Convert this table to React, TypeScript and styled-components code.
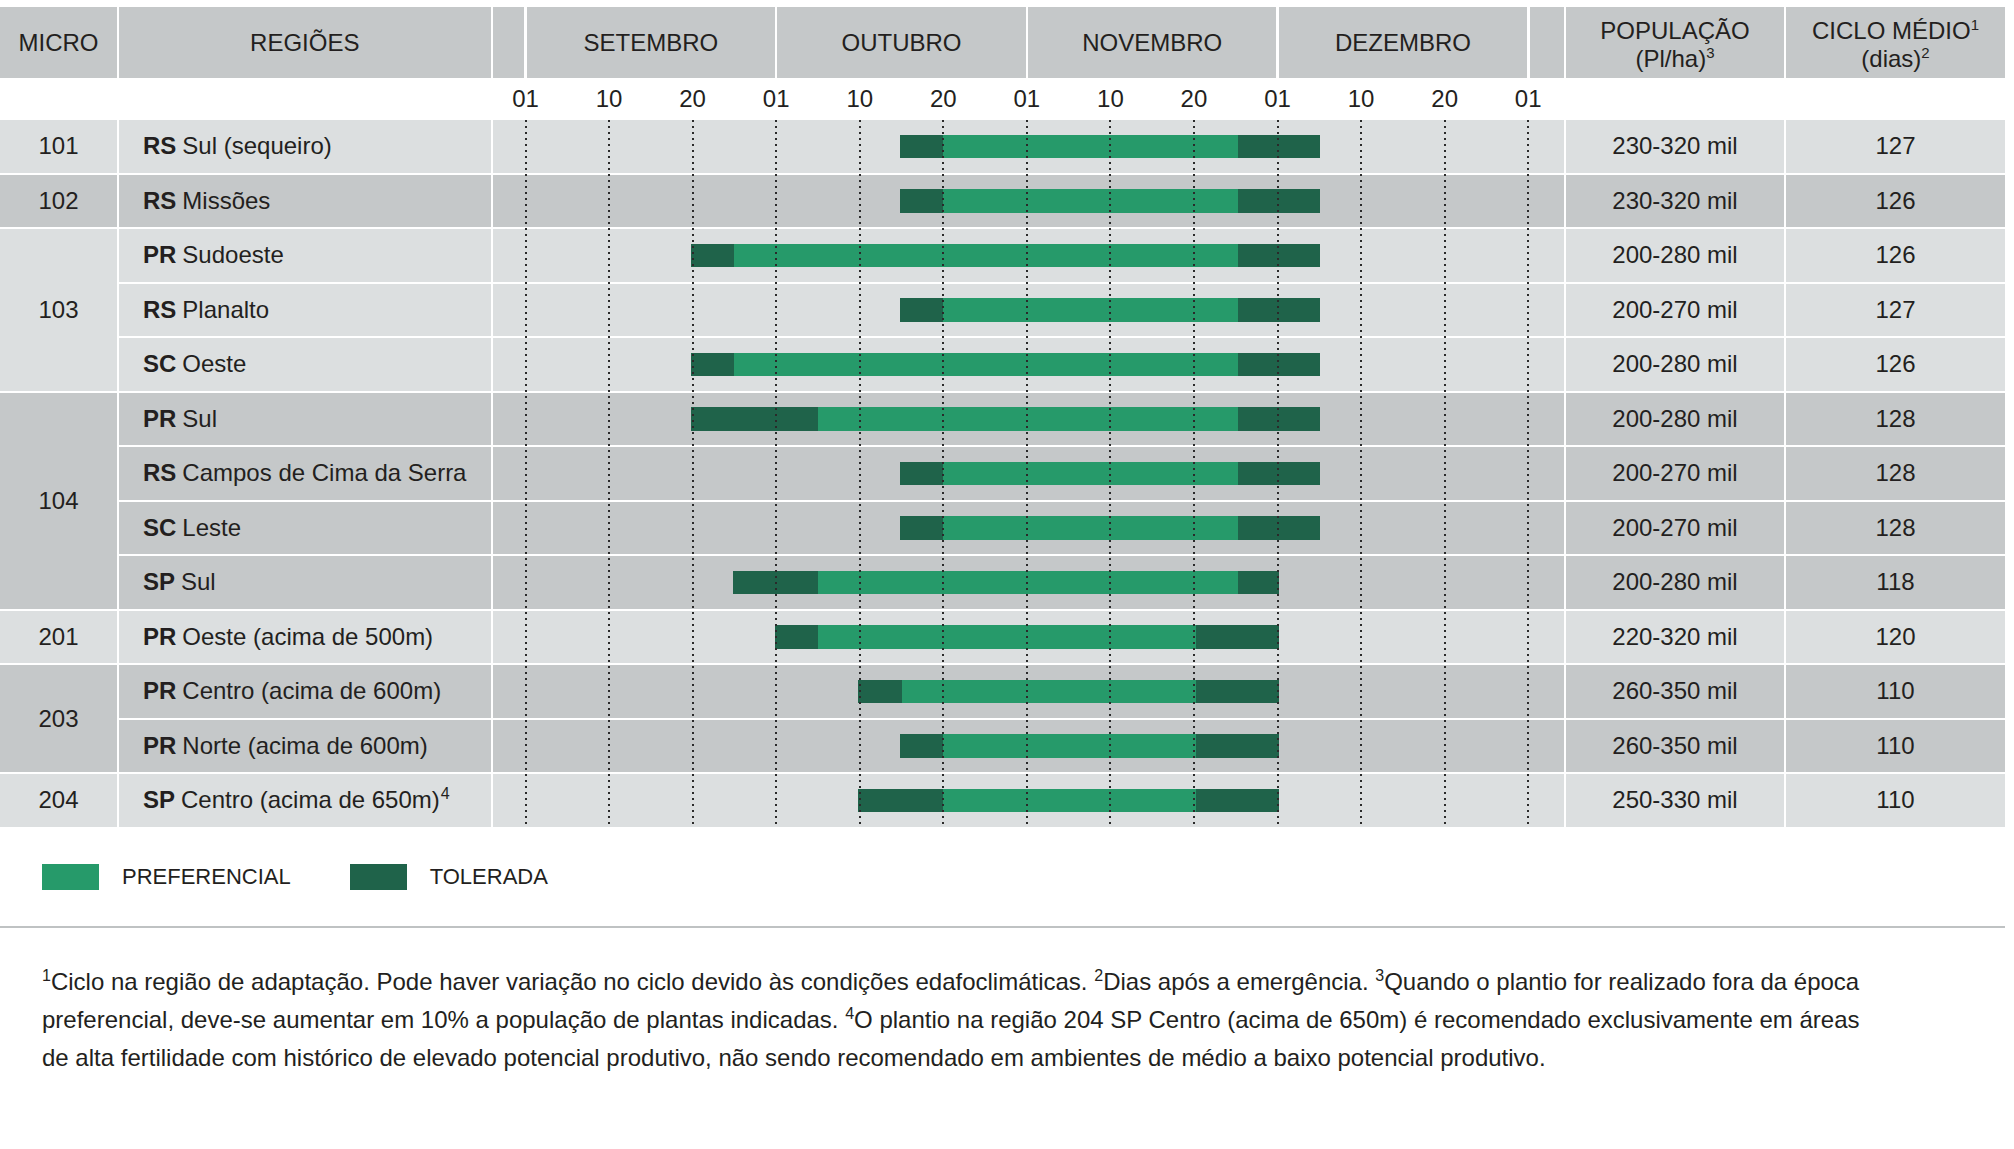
import React from "react";
import styled, { createGlobalStyle } from "styled-components";

const LIGHT = "#dcdfe0";
const DARK = "#c5c8c9";
const GREEN = "#269a6a";
const DEEP = "#1f634a";
const INK = "#231f20";

const AXIS0 = 33;
const THIRD = 83.56;
const pos = (t: number) => AXIS0 + t * THIRD;

type Tone = "light" | "dark";
type Kind = "pref" | "tol";

const GlobalStyle = createGlobalStyle`
  html, body { margin: 0; padding: 0; background: #fff; }
  body { font-family: "Liberation Sans", Arial, sans-serif; color: ${INK}; }
`;

const Page = styled.div`
  width: 2014px;
  padding-top: 7px;
  box-sizing: border-box;
`;

const Table = styled.div`
  display: grid;
  width: 2005px;
  grid-template-columns: 117px 371.5px 1071.5px 218px 219px;
  grid-template-rows: 71px 38px repeat(13, 52.5px);
  column-gap: 2px;
  row-gap: 2px;
  font-size: 24px;
`;

const HeadCell = styled.div<{ $col: number }>`
  grid-row: 1;
  grid-column: ${(p) => p.$col};
  background: ${DARK};
  display: flex;
  align-items: center;
  justify-content: center;
  text-align: center;
  line-height: 27.5px;
`;

const HeadStack = styled.div`
  padding-top: 4px;
`;

const MonthStrip = styled.div`
  grid-row: 1;
  grid-column: 3;
  display: flex;
  gap: 2.5px;
`;

const MonthCell = styled.div<{ $w?: number }>`
  background: ${DARK};
  flex: ${(p) => (p.$w ? `0 0 ${p.$w}px` : "1 1 auto")};
  display: flex;
  align-items: center;
  justify-content: center;
`;

const DayAxis = styled.div`
  grid-row: 2;
  grid-column: 3;
  position: relative;
`;

const DayLabel = styled.span`
  position: absolute;
  top: 50%;
  transform: translate(-50%, -50%);
  line-height: 1;
`;

const MicroCell = styled.div<{ $row: number; $span: number; $tone: Tone }>`
  grid-column: 1;
  grid-row: ${(p) => p.$row} / span ${(p) => p.$span};
  background: ${(p) => (p.$tone === "light" ? LIGHT : DARK)};
  display: flex;
  align-items: center;
  justify-content: center;
`;

const RegionCell = styled.div<{ $row: number; $tone: Tone }>`
  grid-column: 2;
  grid-row: ${(p) => p.$row};
  background: ${(p) => (p.$tone === "light" ? LIGHT : DARK)};
  display: flex;
  align-items: center;
  padding-left: 24px;
  white-space: nowrap;
`;

const RegionText = styled.span`
  display: inline-block;
`;

const State = styled.b`
  font-weight: 700;
  margin-right: 6px;
`;

const Track = styled.div<{ $row: number; $tone: Tone }>`
  grid-column: 3;
  grid-row: ${(p) => p.$row};
  background: ${(p) => (p.$tone === "light" ? LIGHT : DARK)};
  display: flex;
  align-items: center;
`;

const Bar = styled.div`
  display: flex;
  height: 23.5px;
`;

const Segment = styled.div<{ $kind: Kind }>`
  height: 100%;
  background: ${(p) => (p.$kind === "pref" ? GREEN : DEEP)};
`;

const ValueCell = styled.div<{ $col: number; $row: number; $tone: Tone }>`
  grid-column: ${(p) => p.$col};
  grid-row: ${(p) => p.$row};
  background: ${(p) => (p.$tone === "light" ? LIGHT : DARK)};
  display: flex;
  align-items: center;
  justify-content: center;
`;

const Gridlines = styled.div`
  grid-column: 3;
  grid-row: 3 / 16;
  position: relative;
  pointer-events: none;
  z-index: 1;
`;

const Dots = styled.span`
  position: absolute;
  top: 0;
  bottom: 0;
  width: 2px;
  margin-left: -1px;
  background: repeating-linear-gradient(to bottom, #2a2a2a 0 2px, transparent 2px 6px);
`;

const Sup = styled.sup`
  font-size: 15px;
  line-height: 0;
  vertical-align: 0.6em;
`;

const CellSup = styled(Sup)`
  font-size: 16px;
  margin-left: 1px;
`;

const NoteSup = styled(Sup)`
  font-size: 16px;
  vertical-align: 0.55em;
`;

const Legend = styled.div`
  display: flex;
  align-items: center;
  padding-left: 42px;
  margin-top: 37.5px;
  height: 26px;
  font-size: 22px;
`;

const LegendItem = styled.div`
  display: flex;
  align-items: center;
  gap: 23px;
  margin-right: 59px;
`;

const Swatch = styled.span<{ $kind: Kind }>`
  width: 57px;
  height: 26px;
  background: ${(p) => (p.$kind === "pref" ? GREEN : DEEP)};
`;

const Divider = styled.hr`
  margin: 36px 0 0;
  border: 0;
  height: 2px;
  width: 2005px;
  background: #bfc2c3;
`;

const Notes = styled.p`
  margin: 35px 0 0;
  padding-left: 42px;
  font-size: 24px;
  line-height: 38px;
  white-space: nowrap;
`;

type Region = {
  st: string;
  name: string;
  sup?: string;
  bar: [number, number, number, number];
  pop: string;
  cycle: string;
};

type Group = { micro: string; regions: Region[] };

const groups: Group[] = [
  { micro: "101", regions: [{ st: "RS", name: "Sul (sequeiro)", bar: [4.5, 5, 8.5, 9.5], pop: "230-320 mil", cycle: "127" }] },
  { micro: "102", regions: [{ st: "RS", name: "Missões", bar: [4.5, 5, 8.5, 9.5], pop: "230-320 mil", cycle: "126" }] },
  {
    micro: "103",
    regions: [
      { st: "PR", name: "Sudoeste", bar: [2, 2.5, 8.5, 9.5], pop: "200-280 mil", cycle: "126" },
      { st: "RS", name: "Planalto", bar: [4.5, 5, 8.5, 9.5], pop: "200-270 mil", cycle: "127" },
      { st: "SC", name: "Oeste", bar: [2, 2.5, 8.5, 9.5], pop: "200-280 mil", cycle: "126" },
    ],
  },
  {
    micro: "104",
    regions: [
      { st: "PR", name: "Sul", bar: [2, 3.5, 8.5, 9.5], pop: "200-280 mil", cycle: "128" },
      { st: "RS", name: "Campos de Cima da Serra", bar: [4.5, 5, 8.5, 9.5], pop: "200-270 mil", cycle: "128" },
      { st: "SC", name: "Leste", bar: [4.5, 5, 8.5, 9.5], pop: "200-270 mil", cycle: "128" },
      { st: "SP", name: "Sul", bar: [2.5, 3.5, 8.5, 9], pop: "200-280 mil", cycle: "118" },
    ],
  },
  { micro: "201", regions: [{ st: "PR", name: "Oeste (acima de 500m)", bar: [3, 3.5, 8, 9], pop: "220-320 mil", cycle: "120" }] },
  {
    micro: "203",
    regions: [
      { st: "PR", name: "Centro (acima de 600m)", bar: [4, 4.5, 8, 9], pop: "260-350 mil", cycle: "110" },
      { st: "PR", name: "Norte (acima de 600m)", bar: [4.5, 5, 8, 9], pop: "260-350 mil", cycle: "110" },
    ],
  },
  { micro: "204", regions: [{ st: "SP", name: "Centro (acima de 650m)", sup: "4", bar: [4, 5, 8, 9], pop: "250-330 mil", cycle: "110" }] },
];

const months = ["SETEMBRO", "OUTUBRO", "NOVEMBRO", "DEZEMBRO"];
const dayTicks = ["01", "10", "20", "01", "10", "20", "01", "10", "20", "01", "10", "20", "01"];

export default function App() {
  let row = 3;
  const body: React.ReactNode[] = [];
  groups.forEach((g, gi) => {
    const tone: Tone = gi % 2 === 0 ? "light" : "dark";
    body.push(
      <MicroCell key={`m${g.micro}`} $row={row} $span={g.regions.length} $tone={tone}>
        {g.micro}
      </MicroCell>
    );
    g.regions.forEach((r, ri) => {
      const k = `${g.micro}-${ri}`;
      const [a, b, c, d] = r.bar;
      body.push(
        <RegionCell key={`r${k}`} $row={row} $tone={tone}>
          <RegionText>
            <State>{r.st}</State>
            {r.name}
            {r.sup && <CellSup>{r.sup}</CellSup>}
          </RegionText>
        </RegionCell>,
        <Track key={`t${k}`} $row={row} $tone={tone}>
          <Bar style={{ marginLeft: pos(a) - 1.5 }}>
            <Segment $kind="tol" style={{ width: (b - a) * THIRD + 1.5 }} />
            <Segment $kind="pref" style={{ width: (c - b) * THIRD + 2 }} />
            <Segment $kind="tol" style={{ width: (d - c) * THIRD - 1 }} />
          </Bar>
        </Track>,
        <ValueCell key={`p${k}`} $col={4} $row={row} $tone={tone}>
          {r.pop}
        </ValueCell>,
        <ValueCell key={`c${k}`} $col={5} $row={row} $tone={tone}>
          {r.cycle}
        </ValueCell>
      );
      row += 1;
    });
  });

  return (
    <Page>
      <GlobalStyle />
      <Table>
        <HeadCell $col={1}>MICRO</HeadCell>
        <HeadCell $col={2}>REGIÕES</HeadCell>
        <MonthStrip>
          <MonthCell $w={31.75} />
          {months.map((m) => (
            <MonthCell key={m} $w={248.2}>
              {m}
            </MonthCell>
          ))}
          <MonthCell />
        </MonthStrip>
        <HeadCell $col={4}>
          <HeadStack>
            POPULAÇÃO
            <br />
            (Pl/ha)<Sup>3</Sup>
          </HeadStack>
        </HeadCell>
        <HeadCell $col={5}>
          <HeadStack>
            CICLO MÉDIO<Sup>1</Sup>
            <br />
            (dias)<Sup>2</Sup>
          </HeadStack>
        </HeadCell>
        <DayAxis>
          {dayTicks.map((d, i) => (
            <DayLabel key={i} style={{ left: pos(i) }}>
              {d}
            </DayLabel>
          ))}
        </DayAxis>
        {body}
        <Gridlines>
          {dayTicks.map((_, i) => (
            <Dots key={i} style={{ left: pos(i) }} />
          ))}
        </Gridlines>
      </Table>
      <Legend>
        <LegendItem>
          <Swatch $kind="pref" />
          PREFERENCIAL
        </LegendItem>
        <LegendItem>
          <Swatch $kind="tol" />
          TOLERADA
        </LegendItem>
      </Legend>
      <Divider />
      <Notes>
        <NoteSup>1</NoteSup>Ciclo na região de adaptação. Pode haver variação no ciclo devido às condições edafoclimáticas.{" "}
        <NoteSup>2</NoteSup>Dias após a emergência. <NoteSup>3</NoteSup>Quando o plantio for realizado fora da época
        <br />
        preferencial, deve-se aumentar em 10% a população de plantas indicadas. <NoteSup>4</NoteSup>O plantio na região 204 SP
        Centro (acima de 650m) é recomendado exclusivamente em áreas
        <br />
        de alta fertilidade com histórico de elevado potencial produtivo, não sendo recomendado em ambientes de médio a
        baixo potencial produtivo.
      </Notes>
    </Page>
  );
}
